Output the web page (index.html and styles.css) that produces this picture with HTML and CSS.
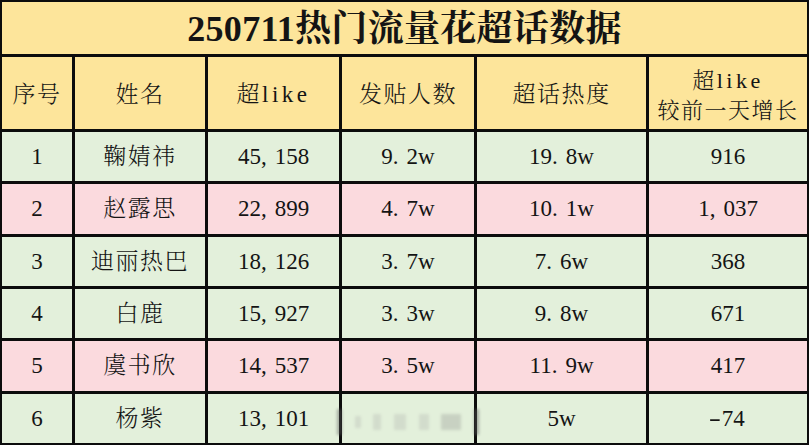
FILE: index.html
```html
<!DOCTYPE html>
<html lang="zh-CN">
<head>
<meta charset="utf-8">
<title>250711热门流量花超话数据</title>
<link rel="stylesheet" href="styles.css">
</head>
<body>
<div class="sheet">
  <div class="cell title">250711热门流量花超话数据</div>

  <div class="cell head">序号</div>
  <div class="cell head">姓名</div>
  <div class="cell head">超<span class="lat">like</span></div>
  <div class="cell head">发贴人数</div>
  <div class="cell head">超话热度</div>
  <div class="cell head two"><span>超<span class="lat">like</span></span><span>较前一天增长</span></div>

  <div class="cell g num">1</div><div class="cell g name">鞠婧祎</div><div class="cell g num">45<span class="p">,</span>158</div><div class="cell g num">9<span class="p">.</span>2w</div><div class="cell g num">19<span class="p">.</span>8w</div><div class="cell g num">916</div>

  <div class="cell r num">2</div><div class="cell r name">赵露思</div><div class="cell r num">22<span class="p">,</span>899</div><div class="cell r num">4<span class="p">.</span>7w</div><div class="cell r num">10<span class="p">.</span>1w</div><div class="cell r num">1<span class="p">,</span>037</div>

  <div class="cell g num">3</div><div class="cell g name">迪丽热巴</div><div class="cell g num">18<span class="p">,</span>126</div><div class="cell g num">3<span class="p">.</span>7w</div><div class="cell g num">7<span class="p">.</span>6w</div><div class="cell g num">368</div>

  <div class="cell g num">4</div><div class="cell g name">白鹿</div><div class="cell g num">15<span class="p">,</span>927</div><div class="cell g num">3<span class="p">.</span>3w</div><div class="cell g num">9<span class="p">.</span>8w</div><div class="cell g num">671</div>

  <div class="cell r num">5</div><div class="cell r name">虞书欣</div><div class="cell r num">14<span class="p">,</span>537</div><div class="cell r num">3<span class="p">.</span>5w</div><div class="cell r num">11<span class="p">.</span>9w</div><div class="cell r num">417</div>

  <div class="cell g num">6</div><div class="cell g name">杨紫</div><div class="cell g num">13<span class="p">,</span>101</div><div class="cell g num"></div><div class="cell g num">5w</div><div class="cell g num"><span class="minus">-</span>74</div>

  <div class="watermark" aria-hidden="true">
    <i class="bar"></i><i class="blob b1"></i><i class="blob b2"></i><i class="blob b3"></i><i class="blob b4"></i><i class="blob b5"></i><i class="bar"></i>
  </div>
</div>
</body>
</html>
```
FILE: styles.css
```css
html, body {
  margin: 0;
  padding: 0;
  background: #ffffff;
}

.sheet {
  position: relative;
  width: 809px;
  height: 445px;
  box-sizing: border-box;
  padding: 2px;
  background: #0c0c0c;
  display: grid;
  grid-template-columns: 70px 130px 131px 132px 169px 158px;
  grid-template-rows: 52px 72px repeat(6, 1fr);
  gap: 3px;
  color: #141414;
}

.cell {
  display: flex;
  align-items: center;
  justify-content: center;
  font-size: 23px;
  line-height: 1;
  font-family: "Liberation Serif", "Noto Serif CJK SC", "Noto Sans CJK SC", serif;
  font-weight: 400;
}

.title {
  grid-column: 1 / -1;
  background: #fde59b;
  font-size: 36px;
  font-weight: 700;
  letter-spacing: 0.3px;
  padding-top: 2px;
}

.head {
  background: #fde59b;
  font-size: 23px;
  letter-spacing: 1.5px;
  font-weight: 300;
  padding-top: 3px;
}

.head.two {
  flex-direction: column;
  gap: 8px;
  font-size: 22px;
  padding-top: 6px;
}

.lat {
  font-family: "Liberation Serif", serif;
  font-weight: 400;
  letter-spacing: 3.5px;
  margin-left: 1px;
}

.name {
  letter-spacing: 1.5px;
  font-weight: 300;
}

.g {
  background: #e3f0db;
}

.r {
  background: #fbdade;
}

.num {
  font-size: 23px;
}

.p {
  margin-right: 8px;
}

.minus {
  display: inline-block;
  transform: scaleX(1.6);
  margin-right: 3px;
}

.watermark {
  position: absolute;
  left: 337px;
  top: 409px;
  width: 142px;
  height: 26px;
  display: flex;
  align-items: center;
  justify-content: space-between;
  filter: blur(1.5px);
  opacity: 0.45;
  pointer-events: none;
}

.watermark .bar {
  display: block;
  width: 5px;
  height: 26px;
  background: #5a5a5a;
}

.watermark .blob {
  display: block;
  height: 16px;
  background: #bfc4ba;
}

.watermark .b1 { width: 6px; height: 12px; }
.watermark .b2 { width: 8px; }
.watermark .b3 { width: 12px; }
.watermark .b4 { width: 10px; }
.watermark .b5 { width: 20px; background: #a8ada4; }
```
